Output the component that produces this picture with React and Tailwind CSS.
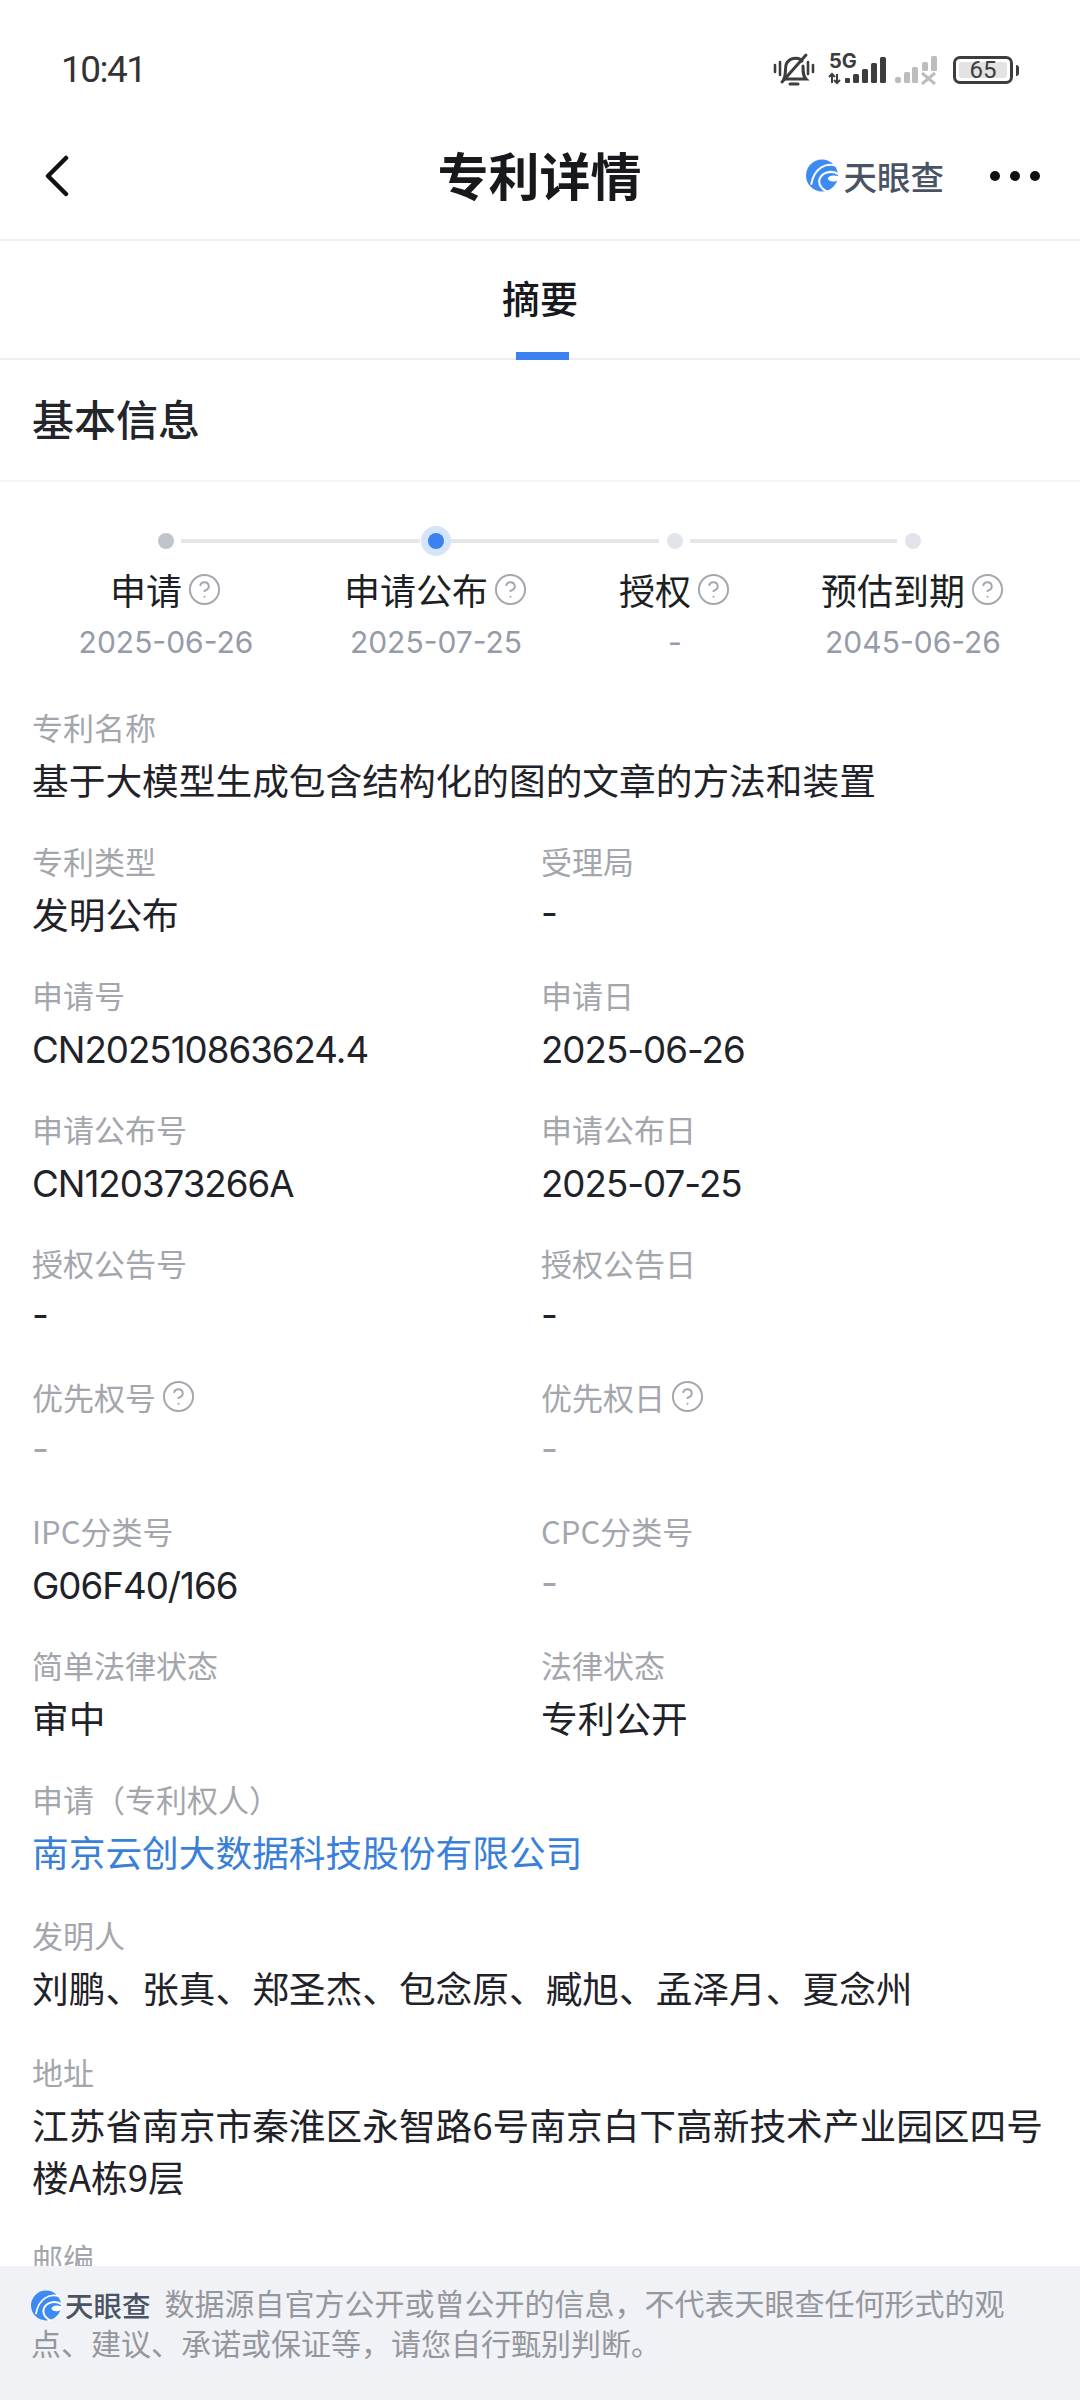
import { CircleHelp } from "lucide-react";

const font = { fontFamily: '"Noto Sans CJK SC", sans-serif' };
const latinFont = { fontFamily: 'Inter, "Noto Sans CJK SC", sans-serif' };

function Logo({ size = 33 }) {
  return (
    <svg width={size} height={size} viewBox="0 0 32 32" className="shrink-0">
      <circle cx="15.5" cy="16" r="15.5" fill="#3d8bf2" />
      <path d="M30 7C20 3 8 8 5 25" fill="none" stroke="#fff" strokeWidth="1.8" />
      <path d="M32 15C24 10 15 13 13 20C12 25 15 29 21 32" fill="none" stroke="#fff" strokeWidth="2" />
      <path d="M32 17C27 15 22 16 21 19C22 22 27 23 32 20Z" fill="#fff" />
    </svg>
  );
}

function Brand({ size, text, gap }) {
  return (
    <span className={`inline-flex items-center ${gap}`}>
      <Logo size={size} />
      <span className={`${text} font-medium leading-none text-[#4a5364]`}>天眼查</span>
    </span>
  );
}

function StatusIcons() {
  return (
    <div className="flex h-9 items-center">
      <svg width="42" height="36" viewBox="0 0 42 36" fill="none" stroke="#3d3d3d" strokeWidth="3" strokeLinecap="round">
        <path d="M11 27C13 23 12 18 13 13C15 6 25 4 29 9" />
        <path d="M30 14C30 20 30 24 33 27H11" />
        <path d="M17 32H25" />
        <path d="M9 30L33 3" />
        <path d="M2 13V20M7 10V23M35 10V22M40 13V20" strokeWidth="2.6" />
      </svg>
      <svg width="62" height="36" viewBox="0 0 62 36" className="ml-[12px] -mt-[4px]" fill="#3d3d3d">
        <path d="M5 24V33M2 27L5 24L8 27M10 33V24M7 30L10 33L13 30" fill="none" stroke="#3d3d3d" strokeWidth="2" />
        <rect x="18" y="28" width="5" height="5" rx="1" />
        <rect x="26" y="24" width="6" height="9" rx="1.5" />
        <rect x="35" y="19" width="6" height="14" rx="1.5" />
        <rect x="44" y="13" width="6" height="20" rx="1.5" />
        <rect x="53" y="7" width="6" height="26" rx="1.5" />
        <text x="2" y="18" fontSize="20" fontWeight="700" fontFamily="Inter, sans-serif">5G</text>
      </svg>
      <svg width="44" height="30" viewBox="0 0 44 30" className="ml-[5px]" fill="#bdbdbd">
        <rect x="1" y="22" width="6" height="6" rx="2" />
        <rect x="10" y="17" width="6" height="11" rx="1.5" />
        <rect x="18" y="12" width="6" height="16" rx="1.5" />
        <rect x="28" y="7" width="6" height="9" rx="1.5" />
        <rect x="37" y="1" width="6" height="15" rx="1.5" />
        <path d="M28 18L41 29M41 18L28 29" stroke="#bdbdbd" strokeWidth="3" />
      </svg>
      <div className="ml-[15px] flex items-center gap-[3px]">
        <div className="flex h-[28px] w-[60px] items-center rounded-[7px] border-[3px] border-[#3d3d3d] p-[3px]">
          <div className="flex h-full w-[48px] items-center justify-center rounded-[3px] bg-[#e3e3e3] text-[24px] leading-none text-[#3d3d3d]" style={{ fontFamily: "Roboto, sans-serif" }}>
            65
          </div>
        </div>
        <div className="h-[11px] w-[3px] rounded-r-full bg-[#3d3d3d]" />
      </div>
    </div>
  );
}

const steps = [
  { label: "申请", date: "2025-06-26", w: "w-[268px]" },
  { label: "申请公布", date: "2025-07-25", w: "w-[272px]" },
  { label: "授权", date: "-", w: "w-[206px]" },
  { label: "预估到期", date: "2045-06-26", w: "w-[270px]" },
];

function Timeline() {
  return (
    <div className="pt-[44px]">
      <div className="flex h-[30px] items-center pl-[158px]">
        <div className="h-4 w-4 rounded-full bg-[#bfc3cc]" />
        <div className="ml-[7px] h-1 w-[239px] bg-[#e4e6ea]" />
        <div className="ml-px flex h-[30px] w-[30px] items-center justify-center rounded-full bg-[#d3e4fb]">
          <div className="h-4 w-4 rounded-full bg-[#3b82f0]" />
        </div>
        <div className="h-1 w-[208px] bg-[#e4e6ea]" />
        <div className="ml-2 h-4 w-4 rounded-full bg-[#e1e4ea]" />
        <div className="ml-[7px] h-1 w-[207px] bg-[#e4e6ea]" />
        <div className="ml-2 h-4 w-4 rounded-full bg-[#e1e4ea]" />
      </div>
      <div className="flex px-8 pt-[9px]">
        {steps.map((s) => (
          <div key={s.label} className={`${s.w} flex flex-col items-center`}>
            <div className="flex h-[48px] items-center gap-[5px] text-[36px] leading-none text-[#1c1f24]">
              {s.label}
              <CircleHelp size={35} strokeWidth={1.35} className="text-[#a4a7ad]" />
            </div>
            <div className="mt-[6px] h-[46px] text-[30px] leading-[46px] text-[#959ba8]" style={{ fontFamily: "Inter, sans-serif" }}>
              {s.date}
            </div>
          </div>
        ))}
      </div>
    </div>
  );
}

function Field({ label, value, help, muted, blue, full, extra = "" }) {
  const latin = /^[\x00-\x7f]+$/.test(value);
  const nudge = latin && value.length > 1;
  return (
    <div className={`${full ? "col-span-2" : ""} ${extra}`}>
      <div className="flex h-[44px] items-center gap-[5px] pb-[2px] text-[31px] leading-none text-[#a3a6ac]">
        {label}
        {help && <CircleHelp size={35} strokeWidth={1.35} className="text-[#a4a7ad]" />}
      </div>
      <div
        className={`mt-[4px] min-h-[52px] text-[36.7px] leading-[52px] ${latin ? "tracking-[-1px]" : ""} ${nudge ? "-mb-[3px] pt-[3px]" : ""} ${blue ? "text-[#3a7fd8]" : muted ? "text-[#a3a6ac]" : "text-[#1f2329]"}`}
        style={latin ? latinFont : undefined}
      >
        {value}
      </div>
    </div>
  );
}

export default function App() {
  return (
    <div className="relative h-[2400px] w-[1080px] overflow-hidden bg-white" style={font}>
      <div className="flex h-[110px] items-start justify-between pl-[61px] pr-[61px] pt-[46px]">
        <div className="text-[37px] leading-[48px] tracking-[-1.5px] text-[#333]" style={{ fontFamily: "Roboto, sans-serif" }}>10:41</div>
        <div className="mt-[6px]"><StatusIcons /></div>
      </div>

      <div className="grid h-[131px] grid-cols-[1fr_auto_1fr] items-center border-b-2 border-[#f1f2f4] pl-[45px] pr-[40px]">
        <svg width="24" height="42" viewBox="0 0 24 42" fill="none" stroke="#111" strokeWidth="4.5" strokeLinecap="round" strokeLinejoin="round" className="mt-[2px]">
          <path d="M21 3L3 21L21 39" />
        </svg>
        <div className="-translate-x-[3px] text-[51px] font-bold leading-none text-[#17191d]">专利详情</div>
        <div className="flex items-center justify-end pt-[2px]">
          <Brand size={33} text="text-[33.5px]" gap="gap-[5px]" />
          <div className="ml-[46px] flex gap-[10px]">
            <div className="h-[10px] w-[10px] rounded-full bg-[#111]" />
            <div className="h-[10px] w-[10px] rounded-full bg-[#111]" />
            <div className="h-[10px] w-[10px] rounded-full bg-[#111]" />
          </div>
        </div>
      </div>

      <div className="relative flex h-[119px] items-center justify-center border-b-2 border-[#eceef1] pb-[6px]">
        <div className="text-[38px] font-medium leading-none text-[#17191d]">摘要</div>
        <div className="absolute -bottom-[2px] left-[516px] h-[8px] w-[53px] bg-[#3b82f0]" />
      </div>

      <div className="flex h-[122px] items-center border-b-2 border-[#f4f5f7] px-8 pb-[5px] text-[42px] font-medium leading-none text-[#22252a]">
        基本信息
      </div>

      <Timeline />

      <div className="mt-[40px] grid grid-cols-[509px_1fr] gap-y-[34px] pl-8 pr-[30px]">
        <Field full label="专利名称" value="基于大模型生成包含结构化的图的文章的方法和装置" />
        <Field label="专利类型" value="发明公布" />
        <Field label="受理局" value="-" />
        <Field label="申请号" value="CN202510863624.4" />
        <Field label="申请日" value="2025-06-26" />
        <Field label="申请公布号" value="CN120373266A" />
        <Field label="申请公布日" value="2025-07-25" />
        <Field label="授权公告号" value="-" />
        <Field label="授权公告日" value="-" />
        <Field label="优先权号" help muted value="-" />
        <Field label="优先权日" help muted value="-" />
        <Field label="IPC分类号" value="G06F40/166" />
        <Field label="CPC分类号" muted value="-" />
        <Field label="简单法律状态" value="审中" />
        <Field label="法律状态" value="专利公开" />
        <Field full blue label={"申请\uFF08专利权人\uFF09"} value="南京云创大数据科技股份有限公司" />
        <Field full extra="mt-[2px]" label="发明人" value="刘鹏、张真、郑圣杰、包念原、臧旭、孟泽月、夏念州" />
        <Field full extra="mt-[3px]" label="地址" value="江苏省南京市秦淮区永智路6号南京白下高新技术产业园区四号楼A栋9层" />
        <Field full label="邮编" value="-" />
      </div>

      <div className="absolute inset-x-0 bottom-0 h-[134px] bg-[#f1f2f5] pl-[31px] pr-[60px] pt-[16px] text-[30px] leading-[40px] text-[#94979e]">
        <span className="mr-[14px] inline-flex align-[-6px]">
          <Brand size={31} text="text-[28.5px]" gap="gap-[3px]" />
        </span>
        {"数据源自官方公开或曾公开的信息\uFF0C不代表天眼查任何形式的观点、建议、承诺或保证等\uFF0C请您自行甄别判断。"}
      </div>
    </div>
  );
}
